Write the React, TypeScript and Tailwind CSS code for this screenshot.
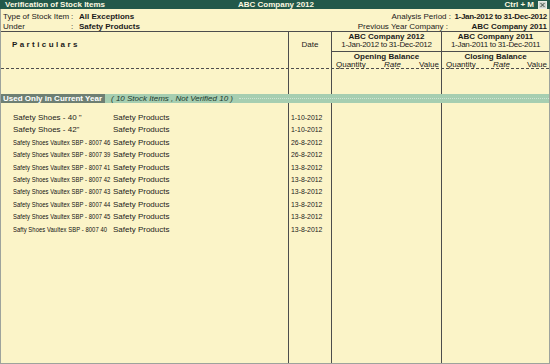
import type { ReactNode } from 'react'

type Item = { name: string; date: string; narrow: boolean }

const items: Item[] = [
  { name: 'Safety Shoes - 40 "', date: '1-10-2012', narrow: false },
  { name: 'Safety Shoes - 42"', date: '1-10-2012', narrow: false },
  { name: 'Safety Shoes Vaultex SBP -  8007 46', date: '26-8-2012', narrow: true },
  { name: 'Safety Shoes Vaultex SBP - 8007 39', date: '26-8-2012', narrow: true },
  { name: 'Safety Shoes Vaultex SBP - 8007 41', date: '13-8-2012', narrow: true },
  { name: 'Safety Shoes Vaultex SBP - 8007 42', date: '13-8-2012', narrow: true },
  { name: 'Safety Shoes Vaultex SBP - 8007 43', date: '13-8-2012', narrow: true },
  { name: 'Safety Shoes Vaultex SBP - 8007 44', date: '13-8-2012', narrow: true },
  { name: 'Safety Shoes Vaultex SBP - 8007 45', date: '13-8-2012', narrow: true },
  { name: 'Safty Shoes Vaultex SBP -  8007 40', date: '13-8-2012', narrow: true },
]

// one row of the four ruled columns
function Cols({ className = '', a, b }: { className?: string; a?: ReactNode; b?: ReactNode }) {
  return (
    <div className={`grid grid-cols-[287px_43px_110px_1fr] ${className}`}>
      <div className="min-w-0">{a}</div>
      <div className="border-l border-[#4d4d4d]">{b}</div>
      <div className="border-l border-[#4d4d4d]" />
      <div className="border-l border-[#4d4d4d]" />
    </div>
  )
}

function BalanceHead({ company, period, title }: { company: string; period: string; title: string }) {
  return (
    <div className="flex flex-col">
      <div className="h-[20px] border-b border-[#4d4d4d] pt-px text-center leading-[8px]">
        <div className="font-bold">{company}</div>
        <div className="tracking-[-0.3px]">{period}</div>
      </div>
      <div className="pt-px text-center font-bold leading-[8px]">{title}</div>
      <div className="flex justify-between px-[4px] pr-[2px] leading-[8px]">
        <span>Quantity</span>
        <span className="italic">Rate</span>
        <span>Value</span>
      </div>
    </div>
  )
}

export default function App() {
  return (
    <div className="flex h-[364px] w-[550px] flex-col border-x border-b border-[#9da39c] bg-[#fbf4c8] font-['Liberation_Sans',Arial,sans-serif] text-[8px] text-[#1b1b1b]">
      {/* title bar */}
      <div className="-mx-px flex h-[9px] items-center bg-[#23594a] pl-[5px] pr-[3px] font-bold leading-[9px] text-[#fdf8e0]">
        <span className="flex-1">Verification of Stock Items</span>
        <span className="flex-1 text-center">ABC Company 2012</span>
        <span className="flex flex-1 items-center justify-end gap-[4px]">
          Ctrl + M
          <svg width="9" height="8" viewBox="0 0 9 8">
            <rect x="0.5" y="0.5" width="8" height="7" fill="#cfd6cf" stroke="#e8ece6" />
            <path d="M2.5 2 L6.5 6 M6.5 2 L2.5 6" stroke="#3c4a42" strokeWidth="1" />
          </svg>
        </span>
      </div>

      {/* report info */}
      <div className="flex h-[22px] justify-between pl-[2px] pr-[2px] pt-[3px] leading-[9px]">
        <div className="grid grid-cols-[68px_8px_auto]">
          <span>Type of Stock Item</span>
          <span>:</span>
          <span className="font-bold">All Exceptions</span>
          <span>Under</span>
          <span>:</span>
          <span className="font-bold">Safety Products</span>
        </div>
        <div className="grid grid-cols-[auto_96px]">
          <span className="text-right">Analysis Period :</span>
          <span className="text-right font-bold tracking-[-0.3px]">1-Jan-2012 to 31-Dec-2012</span>
          <span className="pr-[3px] text-right">Previous Year Company :</span>
          <span className="text-right font-bold">ABC Company 2011</span>
        </div>
      </div>
      <div className="h-px bg-[#4d4d4d]" />

      {/* column header */}
      <div className="grid h-[37px] grid-cols-[287px_43px_110px_1fr] border-b border-dashed border-[#4d4d4d]">
        <div className="pl-[11px] pt-[9px] font-bold leading-[8px] tracking-[2.4px]">Particulars</div>
        <div className="border-l border-[#4d4d4d] pt-[9px] text-center leading-[8px]">Date</div>
        <div className="border-l border-[#4d4d4d]">
          <BalanceHead company="ABC Company 2012" period="1-Jan-2012 to 31-Dec-2012" title="Opening Balance" />
        </div>
        <div className="border-l border-[#4d4d4d]">
          <BalanceHead company="ABC Company 2011" period="1-Jan-2011 to 31-Dec-2011" title="Closing Balance" />
        </div>
      </div>

      {/* body */}
      <div className="flex flex-1 flex-col">
        <Cols className="h-[25px]" />
        <div className="flex h-[9px] items-center bg-[#a6ceb1] leading-[9px]">
          <span className="bg-[#6e7f73] pl-[2px] pr-[3px] font-bold text-white">Used Only in Current Year</span>
          <span className="pl-[6px] italic text-[#1d3a2e]">( 10 Stock Items , Not Verified 10 )</span>
          <span className="ml-[6px] flex-1 border-t border-dotted border-[#cfe5d4]" />
        </div>
        <Cols className="h-[9px]" />
        {items.map((it) => (
          <Cols
            key={it.name}
            className="h-[12.4px] items-stretch leading-[12.4px]"
            a={
              <div className="flex whitespace-nowrap pl-[12px]">
                <span className="w-[100px] overflow-visible">
                  {it.narrow ? (
                    <span className="inline-block origin-left scale-x-[0.73] tracking-[0.1px] text-[#111]">{it.name}</span>
                  ) : (
                    it.name
                  )}
                </span>
                <span>Safety Products</span>
              </div>
            }
            b={
              <div className="pl-[2px]">
                <span className="inline-block origin-left scale-x-[0.86] whitespace-nowrap">{it.date}</span>
              </div>
            }
          />
        ))}
        <Cols className="flex-1" />
      </div>
    </div>
  )
}
